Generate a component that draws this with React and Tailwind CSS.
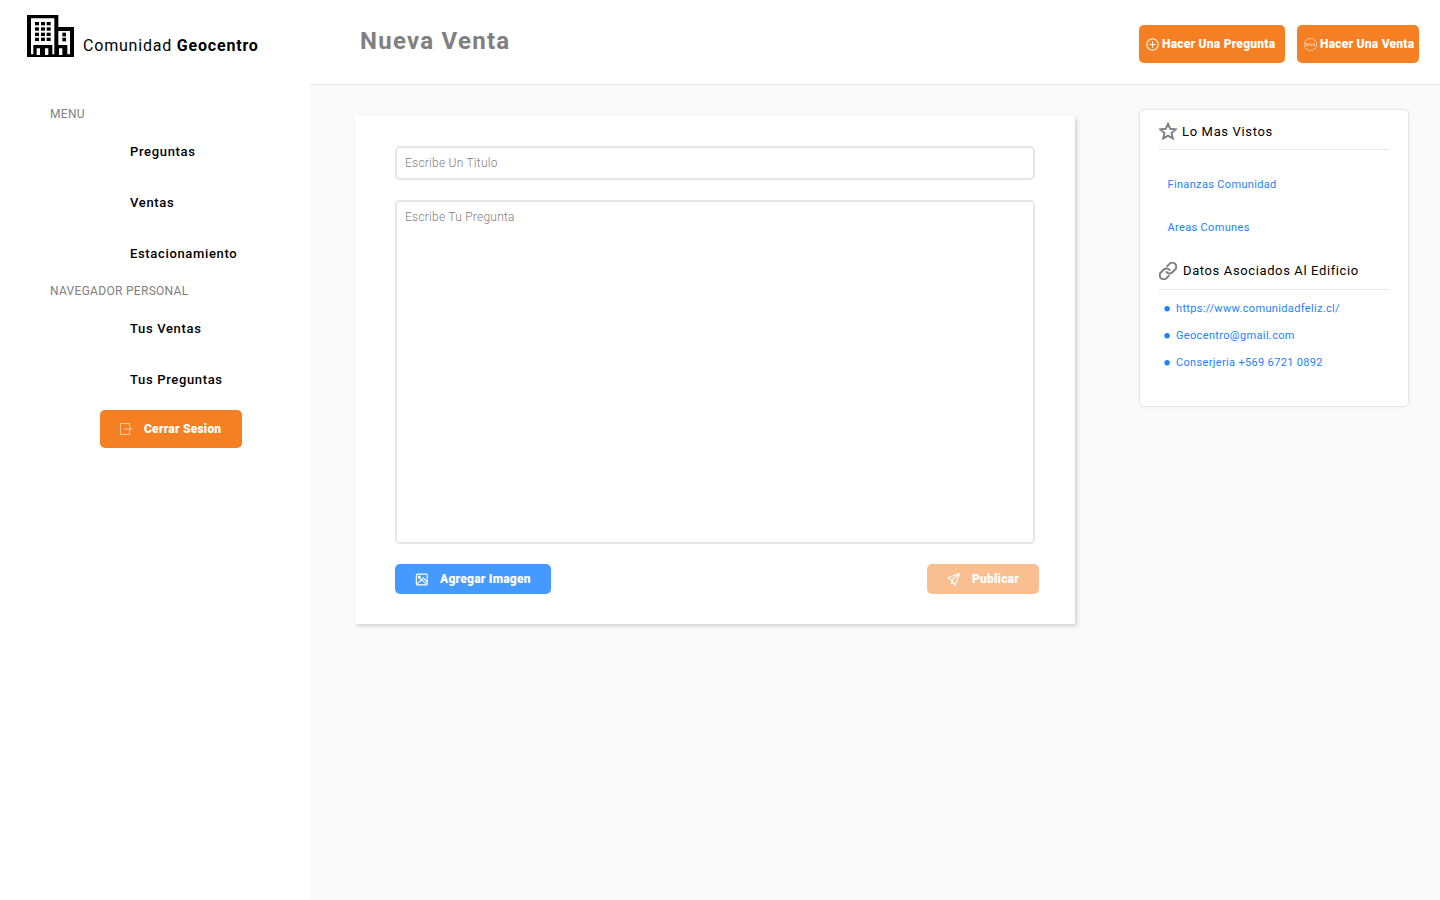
import React from "react";

function BuildingLogo() {
  const rows = [21, 37, 53, 68];
  return (
    <svg className="h-[42px] w-[47px] shrink-0" viewBox="0 0 141 126" fill="#000">
      <path fillRule="evenodd" d="M0 0H94V36H141V126H0ZM12 10V118H19V90H76V118H82V10ZM94 48V90H121V118H129V48Z" />
      {rows.map((y) => [24, 42, 59].map((x) => <rect key={`${x}-${y}`} x={x} y={y} width="12" height="10" />))}
      {rows.slice(2).map((y) => <rect key={y} x="106" y={y} width="11" height="11" />)}
      <path fill="#fff" d="M29 100h10v20H29zM54 100h10v20H54zM96 100h10v20H96z" />
    </svg>
  );
}

function Icon({ className, sw = 1, children }) {
  return (
    <svg className={className} viewBox="0 0 24 24" fill="none" stroke="currentColor" strokeWidth={sw} strokeLinejoin="round" strokeLinecap="round">
      {children}
    </svg>
  );
}

function NavItem({ children }) {
  return <a className="flex h-[51px] items-center pl-[130px] text-[13px] font-medium tracking-[0.66px] text-black">{children}</a>;
}

function NavHeading({ children }) {
  return <h2 className="pl-[50px] text-[12px] leading-6 tracking-[0.3px] text-[#808080]">{children}</h2>;
}

function Sidebar() {
  return (
    <aside className="h-[900px] w-[310px] shrink-0 bg-white">
      <div className="flex h-[102px] pt-[15px] pl-[27px]">
        <BuildingLogo />
        <p className="ml-[9px] pt-[19px] text-[16px] leading-6 tracking-[0.8px]">
          Comunidad <b className="font-bold">Geocentro</b>
        </p>
      </div>
      <NavHeading>MENU</NavHeading>
      <nav className="h-[153px]">
        <NavItem>Preguntas</NavItem>
        <NavItem>Ventas</NavItem>
        <NavItem>Estacionamiento</NavItem>
      </nav>
      <NavHeading>NAVEGADOR PERSONAL</NavHeading>
      <nav>
        <NavItem>Tus Ventas</NavItem>
        <NavItem>Tus Preguntas</NavItem>
      </nav>
      <button className="mt-[5px] ml-[100px] flex h-[38px] w-[142px] items-center rounded-[5px] bg-[#f58023] pl-[20px] text-[12px] font-black tracking-[0.24px] text-white">
        <svg className="mr-[12px] h-[12px] w-[12px]" viewBox="0 0 12 12" fill="none" stroke="#fff" strokeOpacity="0.6">
          <path strokeWidth="0.9" d="M9.500 4V0.500H0.500v11h9V8" />
          <path strokeWidth="1" d="M4 6h7.500M9.700 4.200L11.500 6 9.700 7.800" />
        </svg>
        Cerrar Sesion
      </button>
    </aside>
  );
}

function Header() {
  return (
    <header className="flex h-[85px] border-b border-[#e6e6e6] bg-white pl-[50px]">
      <h1 className="w-[779px] pt-[23px] text-[24px] leading-9 font-bold tracking-[1.26px] text-[#808080]">Nueva Venta</h1>
      <div className="flex gap-3 pt-[25px] text-[12px] font-black tracking-[0.24px] whitespace-nowrap text-white">
        <button className="flex h-[38px] w-[146px] items-center rounded-[5px] bg-[#f58023] pl-[7px]">
          <Icon className="mr-[3px] size-[13px]" sw={1.9}>
            <circle cx="12" cy="12" r="10.5" />
            <path d="M12 7v10M7 12h10" />
          </Icon>
          Hacer Una Pregunta
        </button>
        <button className="flex h-[38px] w-[122px] items-center rounded-[5px] bg-[#f58023] pl-[7px]">
          <svg className="mr-[3px] size-[13px] opacity-80" viewBox="0 0 26 26" fill="none" stroke="#fff">
            <circle cx="13" cy="13" r="12" strokeWidth="1.9" strokeDasharray="4.8 1.48" />
            <path strokeWidth="1.5" d="M7 11H4.500v2H7v2H4.500M8.500 15l1.700-4 1.700 4M14 11v4h2.500M21 11h-2.500v4H21M18.500 13H21" />
          </svg>
          Hacer Una Venta
        </button>
      </div>
    </header>
  );
}

function PostForm() {
  return (
    <form className="mt-[31px] ml-[45px] flex h-[508px] w-[720px] flex-col bg-white px-[40px] pt-[30px] shadow-[2px_2px_4px_rgba(0,0,0,0.17)]">
      <input
        className="h-[34px] w-[640px] rounded-[5px] border-2 border-[#e6e6e6] px-2 text-[12px] font-light tracking-[0.24px] outline-none placeholder:text-[#808080]"
        placeholder="Escribe Un Titulo"
      />
      <textarea
        className="mt-5 h-[344px] w-[640px] resize-none rounded-[5px] border-2 border-[#e6e6e6] px-2 pt-[6px] text-[12px] leading-[18px] font-light tracking-[0.24px] outline-none placeholder:text-[#808080]"
        placeholder="Escribe Tu Pregunta"
      />
      <div className="mt-5 flex w-[644px] justify-between text-[12px] font-black tracking-[0.24px] text-white">
        <button type="button" className="flex h-[30px] w-[156px] items-center rounded-[5px] bg-[#459aff] pl-5">
          <Icon className="mr-[12px] size-[13px]" sw={2.1}>
            <rect x="2.500" y="2" width="20" height="20" rx="1.500" />
            <path d="M3.500 20l7-6M6 8l15 12M11 14l4.500-5 6 7" />
            <circle cx="8" cy="7.500" r="1.800" fill="currentColor" />
          </Icon>
          Agregar Imagen
        </button>
        <button type="button" className="flex h-[30px] w-[112px] items-center rounded-[5px] bg-[#fabf91] pl-5">
          <Icon className="mr-[12px] size-[13px]" sw={1.9}>
            <path d="M23 1L1 9l8 4 6 10zM23 1L9 13l-1 7 4-3" />
          </Icon>
          Publicar
        </button>
      </div>
    </form>
  );
}

function InfoPanel() {
  const contacts = ["https://www.comunidadfeliz.cl/", "Geocentro@gmail.com", "Conserjeria +569 6721 0892"];
  return (
    <aside className="mt-[24px] ml-[64px] h-[298px] w-[270px] rounded-[5px] border border-[#e6e6e6] bg-white px-[19px] shadow-[0_0_4px_rgba(0,0,0,0.04)]">
      <h2 className="flex h-[40px] items-center border-b border-[#e6e6e6] pt-[3px] text-[13px] tracking-[0.66px]">
        <Icon className="mr-[5px] size-[18px] text-[#808080]" sw={2.6}>
          <path strokeLinejoin="miter" d="M12 2.500l3 6.600 7.200.8-5.400 4.800 1.500 7.200L12 18.300l-6.300 3.600 1.500-7.200L1.800 9.900 9 9.100z" />
        </Icon>
        <span className="pt-[2px]">Lo Mas Vistos</span>
      </h2>
      <div className="flex flex-col pt-[14px] pl-[8.500px] text-[11px] tracking-[0.34px] text-[#1a82ff]">
        <a className="flex h-[43px] items-center">Finanzas Comunidad</a>
        <a className="flex h-[43px] items-center">Areas Comunes</a>
      </div>
      <h2 className="flex h-[40px] items-center border-b border-[#e6e6e6] pt-[3px] text-[13px] tracking-[0.62px]">
        <Icon className="mr-[6px] size-[18px] text-[#808080]" sw={2.7}>
          <path d="M10 13.500a5 5 0 0 0 7.500.5l4-4a5 5 0 0 0-7.500-7.500l-3 3M14 10.500a5 5 0 0 0-7.500-.5l-4 4a5 5 0 0 0 7.500 7.500l3-3" />
        </Icon>
        Datos Asociados Al Edificio
      </h2>
      <ul className="pt-[5px] pl-[5px] text-[11px] tracking-[0.34px] text-[#1a82ff]">
        {contacts.map((c) => (
          <li key={c} className="flex h-[27px] items-center gap-[6px]">
            <svg className="size-[6px]" viewBox="0 0 6 6">
              <circle cx="3.100" cy="2.800" r="2.700" fill="#1a82ff" />
            </svg>
            <span className="pt-[2px]">{c}</span>
          </li>
        ))}
      </ul>
    </aside>
  );
}

export default function App() {
  return (
    <div className="flex h-[900px] w-[1440px] overflow-hidden bg-[#fafafa] font-['Roboto',sans-serif] text-black">
      <Sidebar />
      <main className="w-[1130px]">
        <Header />
        <div className="flex items-start">
          <PostForm />
          <InfoPanel />
        </div>
      </main>
    </div>
  );
}
